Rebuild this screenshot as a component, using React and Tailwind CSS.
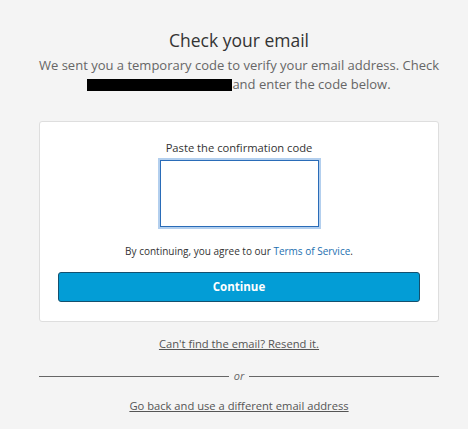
export default function App() {
  return (
    <div className="min-h-screen bg-[#f4f4f4] font-['Open_Sans',sans-serif]">
      <div className="ml-[39px] w-[400px] pt-[26px] text-center">
        <h1 className="text-[17.5px] leading-[28px] text-[#333]">Check your email</h1>
        <p className="-mx-[20px] mt-[2px] text-[13px] leading-[19px] text-[#666]">
          We sent you a temporary code to verify your email address. Check
          <br />
          <span className="inline-block h-[12px] w-[145px] bg-black align-[-2px]"></span>
          and enter the code below.
        </p>

        <div className="mt-[27px] rounded-[3px] border border-[#dedede] bg-white px-[18px] pb-[19px] pt-[18px]">
          <label htmlFor="code" className="block text-[11.2px] leading-[16px] text-[#333]">
            Paste the confirmation code
          </label>
          <textarea
            id="code"
            className="mx-auto mt-[4px] block h-[67px] w-[159px] resize-none border border-[#2a6cb8] bg-white outline-none ring-2 ring-[#b3cfee]"
          />
          <p className="mt-[16px] text-[10px] leading-[16px] text-[#333]">
            By continuing, you agree to our{' '}
            <a href="#" className="text-[#1c6fb0]">Terms of Service</a>.
          </p>
          <button className="mt-[13px] block h-[30px] w-full rounded-[3px] border border-[#14506e] bg-[#039dd6] text-[11.5px] font-bold text-white">
            Continue
          </button>
        </div>

        <a href="#" className="mt-[14px] inline-block text-[11.2px] leading-[16px] text-[#555] underline">
          Can't find the email? Resend it.
        </a>

        <div className="mt-[14px] flex h-[16px] items-center gap-[5px]">
          <div className="h-px flex-1 bg-[#666]"></div>
          <span className="text-[11px] italic leading-[16px] text-[#666]">or</span>
          <div className="h-px flex-1 bg-[#666]"></div>
        </div>

        <a href="#" className="mt-[14px] inline-block text-[11.2px] leading-[16px] text-[#555] underline">
          Go back and use a different email address
        </a>
      </div>
    </div>
  )
}
